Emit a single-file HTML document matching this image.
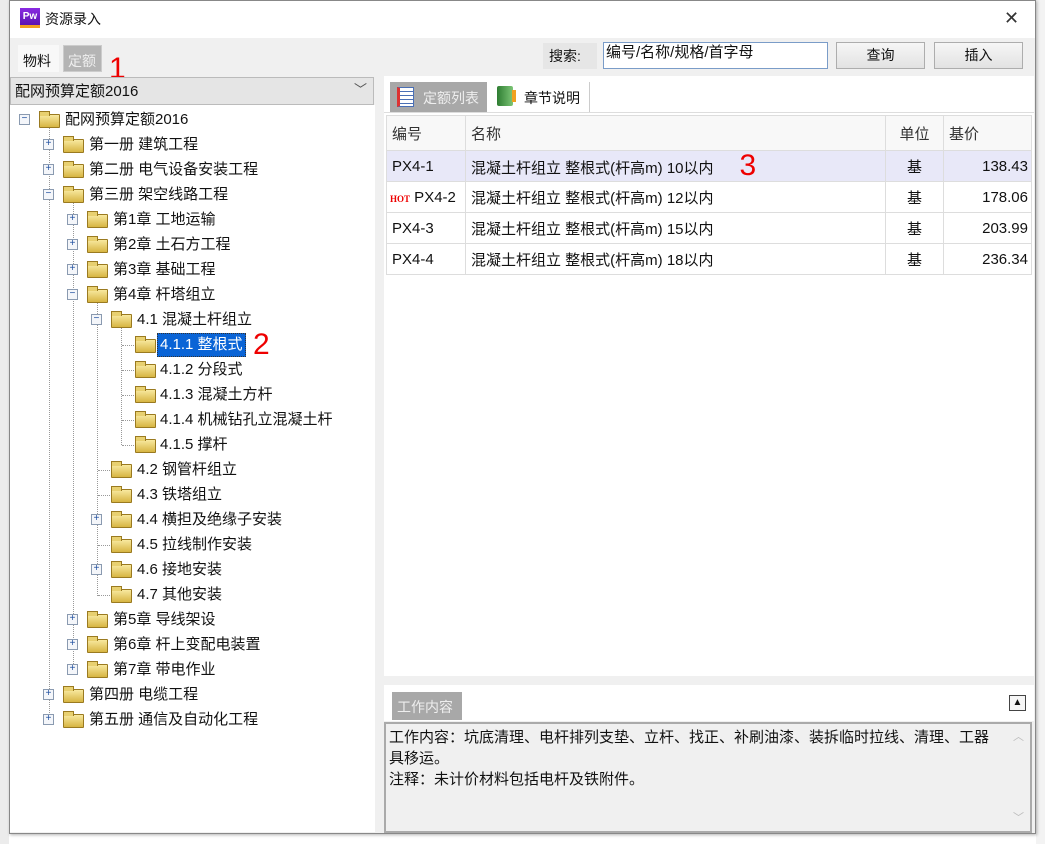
<!DOCTYPE html>
<html><head><meta charset="utf-8"><style>
*{margin:0;padding:0;box-sizing:border-box}
body{width:1045px;height:844px;position:relative;overflow:hidden;background:#fff;font-family:"Liberation Sans","Noto Sans CJK SC",sans-serif;font-size:15px;color:#111}
.a{position:absolute}
.r{position:absolute;white-space:nowrap;line-height:20px}
.fold{position:absolute;width:21px;height:14px;background:linear-gradient(#f8e9a0,#d7b542);border:1px solid #9a7a20;border-radius:1px}
.fold:before{content:"";position:absolute;left:-1px;top:-4px;width:9px;height:4px;background:#e8d070;border:1px solid #9a7a20;border-bottom:none}
.ex{position:absolute;width:11px;height:11px;border:1px solid #8a9ab0;background:#f4f6fa;font-size:10px;line-height:9px;text-align:center;color:#2050a0;font-family:"Liberation Mono",monospace}
.vl{position:absolute;border-left:1px dotted #999;width:0}
.hl{position:absolute;border-top:1px dotted #999;height:0}
.btn{position:absolute;background:linear-gradient(#f6f6f6,#e2e2e2);border:1px solid #adadad;text-align:center;line-height:25px;font-size:14px}
td{border-right:1px solid #ddd;border-bottom:1px solid #ddd;padding:0 5px;white-space:nowrap}
</style></head><body>
<div class="a" style="left:0;top:0;width:9px;height:844px;background:#ececec"></div>
<div class="a" style="left:1036px;top:0;width:9px;height:844px;background:#f3f3f3"></div>
<div class="a" style="left:9px;top:0;width:1027px;height:834px;background:#f0f0f0;border:1px solid #888;box-shadow:1px 1px 3px rgba(0,0,0,.3)"></div>
<div class="a" style="left:10px;top:1px;width:1025px;height:37px;background:#fff"></div>
<div class="a" style="left:20px;top:8px;width:20px;height:20px;background:linear-gradient(#8a2be2,#5a12b0);border-bottom:3px solid #f0a020;color:#fff;font-size:10px;font-weight:bold;line-height:17px;text-align:center">Pw</div>
<div class="r" style="left:45px;top:9px;font-size:14px">资源录入</div>
<div class="r" style="left:1004px;top:8px;font-size:18px;color:#333">✕</div>
<div class="a" style="left:18px;top:45px;width:41px;height:27px;background:#f8f8f8"></div>
<div class="r" style="left:23px;top:51px;font-size:14px">物料</div>
<div class="a" style="left:63px;top:45px;width:39px;height:27px;background:#b4b4b4;border:1px solid #ccc"></div>
<div class="r" style="left:68px;top:51px;color:#eee;font-size:14px">定额</div>
<div class="r" style="left:109px;top:54px;color:#e00;font-size:30px;line-height:30px">1</div>
<div class="a" style="left:10px;top:77px;width:364px;height:28px;background:#e5e5e5;border:1px solid #bbb"></div>
<div class="r" style="left:15px;top:82px;font-size:15px">配网预算定额2016</div>
<div class="r" style="left:354px;top:80px;color:#555;font-size:13px">﹀</div>
<div class="a" style="left:10px;top:105px;width:365px;height:727px;background:#fff">
 <div class="vl" style="left:39px;top:22px;height:594px"></div>
 <div class="vl" style="left:63px;top:97px;height:470px"></div>
 <div class="vl" style="left:87px;top:197px;height:294px"></div>
 <div class="vl" style="left:111px;top:222px;height:118px"></div>
</div>
<div class="ex" style="left:19px;top:114px">−</div><div class="fold" style="left:39px;top:114px"></div><div class="r" style="left:65px;top:110px">配网预算定额2016</div>
<div class="ex" style="left:43px;top:139px">+</div><div class="fold" style="left:63px;top:139px"></div><div class="r" style="left:89px;top:135px">第一册 建筑工程</div>
<div class="ex" style="left:43px;top:164px">+</div><div class="fold" style="left:63px;top:164px"></div><div class="r" style="left:89px;top:160px">第二册 电气设备安装工程</div>
<div class="ex" style="left:43px;top:189px">−</div><div class="fold" style="left:63px;top:189px"></div><div class="r" style="left:89px;top:185px">第三册 架空线路工程</div>
<div class="ex" style="left:67px;top:214px">+</div><div class="fold" style="left:87px;top:214px"></div><div class="r" style="left:113px;top:210px">第1章 工地运输</div>
<div class="ex" style="left:67px;top:239px">+</div><div class="fold" style="left:87px;top:239px"></div><div class="r" style="left:113px;top:235px">第2章 土石方工程</div>
<div class="ex" style="left:67px;top:264px">+</div><div class="fold" style="left:87px;top:264px"></div><div class="r" style="left:113px;top:260px">第3章 基础工程</div>
<div class="ex" style="left:67px;top:289px">−</div><div class="fold" style="left:87px;top:289px"></div><div class="r" style="left:113px;top:285px">第4章 杆塔组立</div>
<div class="ex" style="left:91px;top:314px">−</div><div class="fold" style="left:111px;top:314px"></div><div class="r" style="left:137px;top:310px">4.1 混凝土杆组立</div>
<div class="hl" style="left:122px;top:345px;width:12px"></div><div class="fold" style="left:135px;top:339px"></div><div class="r" style="left:157px;top:333px;background:#0a64d6;color:#fff;padding:0 2px;border:1px dotted #333;line-height:22px">4.1.1 整根式</div>
<div class="r" style="left:253px;top:328px;color:#e00;font-size:30px;line-height:34px">2</div>
<div class="hl" style="left:122px;top:370px;width:12px"></div><div class="fold" style="left:135px;top:364px"></div><div class="r" style="left:160px;top:360px">4.1.2 分段式</div>
<div class="hl" style="left:122px;top:395px;width:12px"></div><div class="fold" style="left:135px;top:389px"></div><div class="r" style="left:160px;top:385px">4.1.3 混凝土方杆</div>
<div class="hl" style="left:122px;top:420px;width:12px"></div><div class="fold" style="left:135px;top:414px"></div><div class="r" style="left:160px;top:410px">4.1.4 机械钻孔立混凝土杆</div>
<div class="hl" style="left:122px;top:445px;width:12px"></div><div class="fold" style="left:135px;top:439px"></div><div class="r" style="left:160px;top:435px">4.1.5 撑杆</div>
<div class="hl" style="left:98px;top:470px;width:12px"></div><div class="fold" style="left:111px;top:464px"></div><div class="r" style="left:137px;top:460px">4.2 钢管杆组立</div>
<div class="hl" style="left:98px;top:495px;width:12px"></div><div class="fold" style="left:111px;top:489px"></div><div class="r" style="left:137px;top:485px">4.3 铁塔组立</div>
<div class="ex" style="left:91px;top:514px">+</div><div class="fold" style="left:111px;top:514px"></div><div class="r" style="left:137px;top:510px">4.4 横担及绝缘子安装</div>
<div class="hl" style="left:98px;top:545px;width:12px"></div><div class="fold" style="left:111px;top:539px"></div><div class="r" style="left:137px;top:535px">4.5 拉线制作安装</div>
<div class="ex" style="left:91px;top:564px">+</div><div class="fold" style="left:111px;top:564px"></div><div class="r" style="left:137px;top:560px">4.6 接地安装</div>
<div class="hl" style="left:98px;top:595px;width:12px"></div><div class="fold" style="left:111px;top:589px"></div><div class="r" style="left:137px;top:585px">4.7 其他安装</div>
<div class="ex" style="left:67px;top:614px">+</div><div class="fold" style="left:87px;top:614px"></div><div class="r" style="left:113px;top:610px">第5章 导线架设</div>
<div class="ex" style="left:67px;top:639px">+</div><div class="fold" style="left:87px;top:639px"></div><div class="r" style="left:113px;top:635px">第6章 杆上变配电装置</div>
<div class="ex" style="left:67px;top:664px">+</div><div class="fold" style="left:87px;top:664px"></div><div class="r" style="left:113px;top:660px">第7章 带电作业</div>
<div class="ex" style="left:43px;top:689px">+</div><div class="fold" style="left:63px;top:689px"></div><div class="r" style="left:89px;top:685px">第四册 电缆工程</div>
<div class="ex" style="left:43px;top:714px">+</div><div class="fold" style="left:63px;top:714px"></div><div class="r" style="left:89px;top:710px">第五册 通信及自动化工程</div>
<div class="a" style="left:543px;top:43px;width:54px;height:26px;background:#e6e6e6"></div>
<div class="r" style="left:549px;top:46px;font-size:14px">搜索:</div>
<div class="a" style="left:603px;top:42px;width:225px;height:27px;background:#fff;border:1px solid #7a9cc8"></div>
<div class="r" style="left:606px;top:43px;font-size:15px">编号/名称/规格/首字母</div>
<div class="btn" style="left:836px;top:42px;width:89px;height:27px">查询</div>
<div class="btn" style="left:934px;top:42px;width:89px;height:27px">插入</div>
<div class="a" style="left:384px;top:76px;width:650px;height:600px;background:#fff"></div>
<div class="a" style="left:390px;top:82px;width:97px;height:30px;background:#a8a8a8"></div>
<div class="a" style="left:397px;top:87px;width:17px;height:20px;background:repeating-linear-gradient(#fff 0 3px,#4a6fb5 3px 4px);border:1px solid #4a6fb5;border-left:3px solid #d33"></div>
<div class="r" style="left:423px;top:88px;color:#eee;font-size:14px">定额列表</div>
<div class="a" style="left:497px;top:86px;width:16px;height:20px;background:linear-gradient(90deg,#2e7d32,#7cc576);border-radius:2px"></div>
<div class="a" style="left:512px;top:90px;width:4px;height:12px;background:#f0a020"></div>
<div class="r" style="left:524px;top:88px;font-size:14px">章节说明</div>
<div class="a" style="left:589px;top:82px;width:1px;height:30px;background:#ccc"></div>
<div class="a" style="left:384px;top:112px;width:650px;height:1px;background:#ddd"></div>
<table class="a" style="left:386px;top:115px;border-collapse:collapse;border-left:1px solid #ddd;border-top:1px solid #ddd;font-size:15px">
<tr style="height:35px;background:#f8f8f8;color:#333"><td style="width:79px">编号</td><td style="width:420px">名称</td><td style="width:58px;text-align:center">单位</td><td style="width:88px">基价</td></tr>
<tr style="height:31px;background:#e8e8f8"><td>PX4-1</td><td>混凝土杆组立 整根式(杆高m) 10以内<span style="color:#e00;font-size:30px;position:relative;top:2px;margin-left:26px;line-height:20px">3</span></td><td style="text-align:center">基</td><td style="text-align:right;padding-right:3px">138.43</td></tr>
<tr style="height:31px"><td style="padding-left:3px"><span style="color:#e00;font-size:9px;font-family:'Liberation Serif',serif;font-weight:bold">HOT</span> PX4-2</td><td>混凝土杆组立 整根式(杆高m) 12以内</td><td style="text-align:center">基</td><td style="text-align:right;padding-right:3px">178.06</td></tr>
<tr style="height:31px"><td>PX4-3</td><td>混凝土杆组立 整根式(杆高m) 15以内</td><td style="text-align:center">基</td><td style="text-align:right;padding-right:3px">203.99</td></tr>
<tr style="height:31px"><td>PX4-4</td><td>混凝土杆组立 整根式(杆高m) 18以内</td><td style="text-align:center">基</td><td style="text-align:right;padding-right:3px">236.34</td></tr>
</table>
<div class="a" style="left:384px;top:685px;width:650px;height:36px;background:#fff"></div>
<div class="a" style="left:392px;top:692px;width:70px;height:28px;background:#a8a8a8"></div>
<div class="r" style="left:397px;top:697px;color:#eee;font-size:14px">工作内容</div>
<div class="a" style="left:1009px;top:695px;width:17px;height:16px;border:1px solid #444;background:#f6f6f6;font-size:10px;text-align:center;line-height:14px">▲</div>
<div class="a" style="left:384px;top:722px;width:648px;height:111px;background:#f0f0f0;border:2px solid #aaa"></div>
<div class="a" style="left:389px;top:727px;width:620px;font-size:15px;line-height:21px;white-space:nowrap">工作内容：坑底清理、电杆排列支垫、立杆、找正、补刷油漆、装拆临时拉线、清理、工器<br>具移运。<br>注释：未计价材料包括电杆及铁附件。</div>
<div class="r" style="left:1013px;top:727px;color:#bbb;font-size:11px">︿</div>
<div class="r" style="left:1013px;top:808px;color:#bbb;font-size:11px">﹀</div>
</body></html>
